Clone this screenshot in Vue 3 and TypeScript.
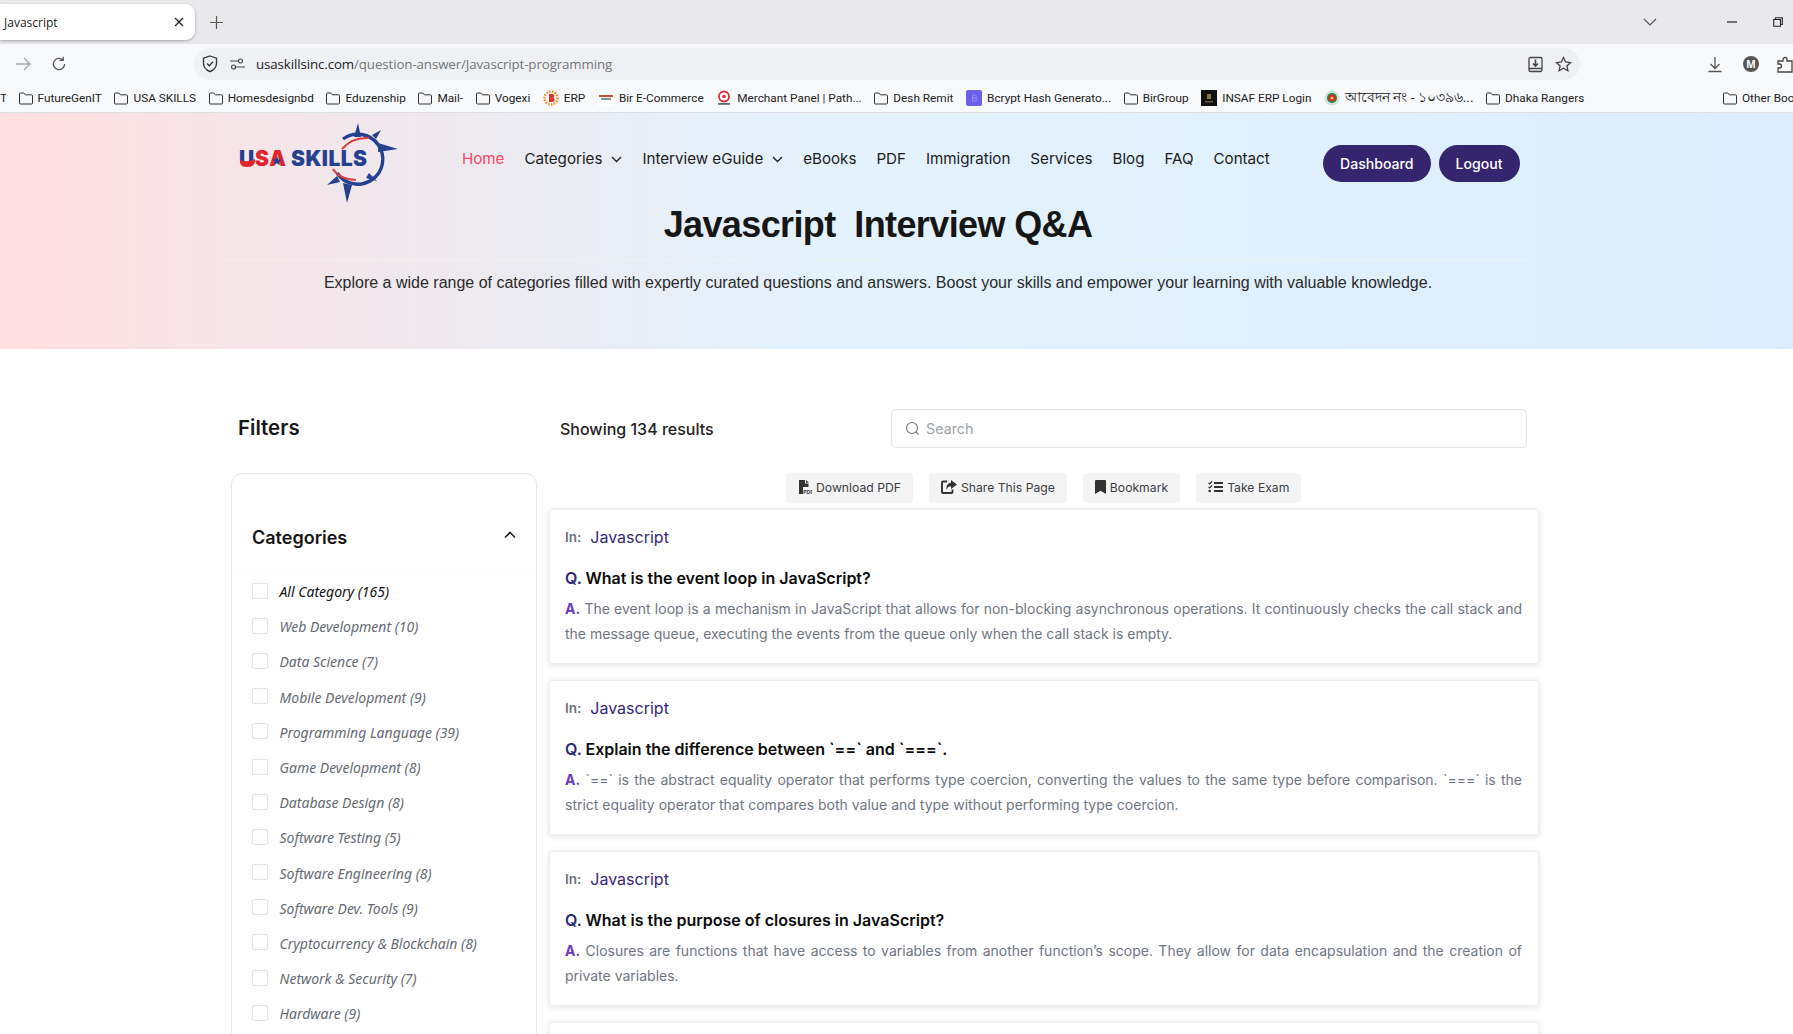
<script setup lang="ts">
interface Mark { label: string; kind: string }
const marks: Mark[] = [
  { label: 'FutureGenIT', kind: 'folder' },
  { label: 'USA SKILLS', kind: 'folder' },
  { label: 'Homesdesignbd', kind: 'folder' },
  { label: 'Eduzenship', kind: 'folder' },
  { label: 'Mail-', kind: 'folder' },
  { label: 'Vogexi', kind: 'folder' },
  { label: 'ERP', kind: 'erp' },
  { label: 'Bir E-Commerce', kind: 'bir' },
  { label: 'Merchant Panel | Path...', kind: 'merchant' },
  { label: 'Desh Remit', kind: 'folder' },
  { label: 'Bcrypt Hash Generato...', kind: 'bcrypt' },
  { label: 'BirGroup', kind: 'folder' },
  { label: 'INSAF ERP Login', kind: 'insaf' },
  { label: 'আবেদন নং - ১০৩৯৬...', kind: 'bd' },
  { label: 'Dhaka Rangers', kind: 'folder' },
]
const navItems = [
  { label: 'Home', active: true },
  { label: 'Categories', caret: true },
  { label: 'Interview eGuide', caret: true },
  { label: 'eBooks' },
  { label: 'PDF' },
  { label: 'Immigration' },
  { label: 'Services' },
  { label: 'Blog' },
  { label: 'FAQ' },
  { label: 'Contact' },
]
const categories = [
  'All Category (165)', 'Web Development (10)', 'Data Science (7)', 'Mobile Development (9)',
  'Programming Language (39)', 'Game Development (8)', 'Database Design (8)', 'Software Testing (5)',
  'Software Engineering (8)', 'Software Dev. Tools (9)', 'Cryptocurrency & Blockchain (8)',
  'Network & Security (7)', 'Hardware (9)',
]
const qas = [
  {
    q: 'What is the event loop in JavaScript?',
    a: 'The event loop is a mechanism in JavaScript that allows for non-blocking asynchronous operations. It continuously checks the call stack and the message queue, executing the events from the queue only when the call stack is empty.',
  },
  {
    q: 'Explain the difference between `==` and `===`.',
    a: '`==` is the abstract equality operator that performs type coercion, converting the values to the same type before comparison. `===` is the strict equality operator that compares both value and type without performing type coercion.',
  },
  {
    q: 'What is the purpose of closures in JavaScript?',
    a: 'Closures are functions that have access to variables from another function’s scope. They allow for data encapsulation and the creation of private variables.',
  },
]
</script>

<template>
  <div class="page">
    <div class="strip">
      <div class="tab">
        <span class="tab-title">Javascript</span>
        <svg class="tab-x" width="10" height="10" viewBox="0 0 10 10"><path d="M1 1l8 8M9 1l-8 8" stroke="#222" stroke-width="1.3" /></svg>
      </div>
      <svg class="plus" width="13" height="13" viewBox="0 0 13 13"><path d="M6.5 0v13M0 6.5h13" stroke="#555" stroke-width="1.2" /></svg>
      <div class="win">
        <svg class="win-chev" width="14" height="8" viewBox="0 0 14 8"><path d="M1 1l6 6 6-6" fill="none" stroke="#555" stroke-width="1.2" /></svg>
        <svg class="win-min" width="10" height="2" viewBox="0 0 10 2"><path d="M0 1h10" stroke="#222" stroke-width="1.2" /></svg>
        <svg class="win-max" width="10" height="10" viewBox="0 0 10 10"><path d="M2.5 2.5V.7h6.8v6.8H7.5M.7 2.5h6.8v6.8H.7z" fill="none" stroke="#222" stroke-width="1.1" /></svg>
      </div>
    </div>

    <div class="toolbar">
      <svg class="tool-fwd" width="16" height="14" viewBox="0 0 16 14"><path d="M1 7h14M9 1l6 6-6 6" fill="none" stroke="#a3a5a8" stroke-width="1.3" /></svg>
      <svg class="tool-reload" width="16" height="16" viewBox="0 0 16 16"><path d="M13.6 8a5.6 5.6 0 1 1-1.7-4M12.2 .8v3.6H8.6" fill="none" stroke="#555" stroke-width="1.3" /></svg>
      <div class="omni">
        <svg class="omni-shield" width="16" height="18" viewBox="0 0 16 18"><path d="M8 1l6.500 2.200v5c0 4-2.800 6.800-6.500 8.500-3.700-1.700-6.500-4.500-6.500-8.500v-5z" fill="none" stroke="#333" stroke-width="1.300" /><path d="M5 8.500l2.200 2.200L11 6.800" fill="none" stroke="#333" stroke-width="1.300" /></svg>
        <svg class="omni-tune" width="15" height="12" viewBox="0 0 15 12"><circle cx="10.500" cy="3" r="2" fill="none" stroke="#444" stroke-width="1.200" /><circle cx="3.500" cy="9" r="2" fill="none" stroke="#444" stroke-width="1.200" /><path d="M0 3h8M6 9h9" stroke="#444" stroke-width="1.200" /></svg>
        <span class="url"><span class="url-host">usaskillsinc.com</span>/question-answer/Javascript-programming</span>
        <svg class="omni-install" width="17" height="17" viewBox="0 0 17 17"><path d="M3.500 1.500h10a1.500 1.500 0 0 1 1.500 1.500v11a1.500 1.500 0 0 1-1.500 1.500h-10A1.500 1.500 0 0 1 2 14V3a1.500 1.500 0 0 1 1.500-1.500zM2 12.500h13" fill="none" stroke="#444" stroke-width="1.300" /><path d="M8.500 3.500v6M6 7.500l2.500 2.500L11 7.500" fill="none" stroke="#444" stroke-width="1.600" /></svg>
        <svg class="omni-star" width="17" height="17" viewBox="0 0 17 17"><path d="M8.500 1.500l2.100 4.500 4.900.6-3.600 3.300 1 4.800-4.400-2.400-4.400 2.400 1-4.800L1.500 6.600l4.900-.6z" fill="none" stroke="#444" stroke-width="1.300" /></svg>
      </div>
      <svg class="tool-dl" width="16" height="17" viewBox="0 0 16 17"><path d="M8 1v11M3.500 8L8 12.500 12.500 8M1.500 15.500h13" fill="none" stroke="#555" stroke-width="1.300" /></svg>
      <span class="tool-avatar">M</span>
      <svg class="tool-ext" width="16" height="17" viewBox="0 0 16 17"><path d="M6 3.500a2 2 0 0 1 4 0V5h5v11H1v-4h1.500a2 2 0 0 0 0-4H1V5h5z" fill="none" stroke="#444" stroke-width="1.300" /></svg>
    </div>

    <div class="bookmarks">
      <span class="bm-cut">T</span>
      <div v-for="m in marks" :key="m.label" class="bm" :class="'bm-' + m.kind">
        <svg v-if="m.kind === 'folder'" class="bm-icon" width="14" height="13" viewBox="0 0 14 13"><path d="M1.500 1h3.300l1.500 1.800h6.200a1 1 0 0 1 1 1V11a1 1 0 0 1-1 1h-11a1 1 0 0 1-1-1V2a1 1 0 0 1 1-1z" fill="none" stroke="#333" stroke-width="1" /></svg>
        <svg v-else-if="m.kind === 'erp'" class="bm-icon" width="16" height="16" viewBox="0 0 16 16"><circle cx="8" cy="8" r="6.500" fill="none" stroke="#f08a1d" stroke-width="2.400" stroke-dasharray="1.500 1.300" /><path d="M6 4h3.500a2 2 0 0 1 .8 3.800A2.200 2.200 0 0 1 9.600 12H6z" fill="#e4342a" /></svg>
        <svg v-else-if="m.kind === 'bir'" class="bm-icon" width="16" height="16" viewBox="0 0 16 16"><rect width="16" height="16" fill="#fff" /><rect x="1" y="5" width="14" height="2" fill="#c7512d" /><rect x="3" y="8" width="10" height="2" fill="#8e8e8e" /></svg>
        <svg v-else-if="m.kind === 'merchant'" class="bm-icon" width="16" height="16" viewBox="0 0 16 16"><circle cx="8" cy="6.500" r="5" fill="none" stroke="#e22c3a" stroke-width="1.800" /><circle cx="8" cy="6.500" r="1.800" fill="#e22c3a" /><rect x="2" y="13" width="12" height="1.800" fill="#666" /></svg>
        <svg v-else-if="m.kind === 'bcrypt'" class="bm-icon" width="16" height="16" viewBox="0 0 16 16"><rect width="16" height="16" rx="2" fill="#6a5fe8" /><path d="M6.500 5h2.500a1.500 1.500 0 0 1 0 3H6.500zM6.500 8h3a1.500 1.500 0 0 1 0 3h-3z" fill="none" stroke="#9a92f2" stroke-width=".8" /></svg>
        <svg v-else-if="m.kind === 'insaf'" class="bm-icon" width="16" height="16" viewBox="0 0 16 16"><rect width="16" height="16" fill="#111" /><rect x="6" y="4" width="4" height="5" fill="#8a7248" /><rect x="4" y="11" width="8" height="1.500" fill="#6a5a3a" /></svg>
        <svg v-else class="bm-icon" width="16" height="16" viewBox="0 0 16 16"><circle cx="8" cy="8" r="7.500" fill="#cfe6d6" /><circle cx="8" cy="8" r="5" fill="#1c8a4a" /><circle cx="8" cy="8" r="3.600" fill="#e0262e" /><circle cx="8" cy="8" r="1.500" fill="#f2c230" /></svg>
        <span>{{ m.label }}</span>
      </div>
      <div class="bm bm-other">
        <svg class="bm-icon" width="14" height="13" viewBox="0 0 14 13"><path d="M1.500 1h3.300l1.500 1.800h6.200a1 1 0 0 1 1 1V11a1 1 0 0 1-1 1h-11a1 1 0 0 1-1-1V2a1 1 0 0 1 1-1z" fill="none" stroke="#333" stroke-width="1" /></svg>
        <span>Other Bookmarks</span>
      </div>
    </div>

    <section class="hero">
      <div class="hero-inner">
        <header class="site-head">
          <svg class="logo" width="165" height="85" viewBox="235 118 165 85" role="img">
            <path d="M343 139A25 25 0 1 1 337 173" fill="none" stroke="#25408f" stroke-width="3.400" />
            <path d="M358 123l3 14-7 0z" fill="#25408f" />
            <path d="M398 149l-20 3 0-9z" fill="#25408f" />
            <path d="M347 203l-4-20 9 2z" fill="#25408f" />
            <path d="M327 185l10-9 3 6z" fill="#25408f" />
            <path d="M381 130l-9 5 4 4z" fill="#25408f" />
            <path d="M377 181l-8-8-3 5z" fill="#25408f" />
            <path d="M342 149q10-12 27-11" fill="none" stroke="#e23b44" stroke-width="2" />
            <path d="M333 169q6 10 23 11" fill="none" stroke="#e23b44" stroke-width="2" />
            <text x="239" y="166" class="logo-usa"><tspan class="logo-u">U</tspan>SA</text>
            <text x="291" y="166" class="logo-skills">SKILLS</text>
            <path d="M240 160q7 3 15-1v3q-1 5-8 5t-7-5z" fill="#e1252f" />
            <path d="M277 156l1.300 3.400 3.500.2-2.800 2.200 1 3.400-3-2-3 2 1-3.400-2.800-2.200 3.500-.2z" fill="#25408f" />
          </svg>
          <nav class="nav">
            <a v-for="n in navItems" :key="n.label" class="nav-link" :class="{ active: n.active }">
              {{ n.label }}
              <svg v-if="n.caret" width="11" height="7" viewBox="0 0 11 7"><path d="M1 1l4.500 4.500L10 1" fill="none" stroke="#222" stroke-width="1.400" /></svg>
            </a>
          </nav>
          <div class="head-btns">
            <button class="pill">Dashboard</button>
            <button class="pill">Logout</button>
          </div>
        </header>
        <h1 class="title">Javascript&nbsp; Interview Q&amp;A</h1>
        <p class="sub">Explore a wide range of categories filled with expertly curated questions and answers. Boost your skills and empower your learning with valuable knowledge.</p>
      </div>
    </section>

    <main class="main">
      <aside class="side">
        <h2 class="filters">Filters</h2>
        <div class="side-card">
          <div class="side-head">
            <h3>Categories</h3>
            <svg width="12" height="8" viewBox="0 0 12 8"><path d="M1 6.500l5-5 5 5" fill="none" stroke="#222" stroke-width="1.600" /></svg>
          </div>
          <ul class="cats">
            <li v-for="(c, i) in categories" :key="c" class="cat" :class="{ first: i === 0 }">
              <span class="box"></span>
              <span>{{ c }}</span>
            </li>
          </ul>
        </div>
      </aside>

      <div class="content">
        <div class="top-row">
          <span class="showing">Showing 134 results</span>
          <div class="search">
            <svg width="15" height="15" viewBox="0 0 15 15"><circle cx="7" cy="7" r="5.500" fill="none" stroke="#777" stroke-width="1.100" /><path d="M11 11l2.500 2.500" stroke="#777" stroke-width="1.100" /></svg>
            <span>Search</span>
          </div>
        </div>
        <div class="actions">
          <button class="act">
            <svg width="14" height="14" viewBox="0 0 14 14"><path d="M1 0h6v3.500h3.500V7H5v7H1z" fill="#333" /><path d="M8 0l3 2.800H8z" fill="#333" /><text x="5.300" y="13.600" class="pdf-tag">PDF</text></svg>
            Download PDF
          </button>
          <button class="act">
            <svg width="16" height="14" viewBox="0 0 16 14"><path d="M6 1.500H2a1 1 0 0 0-1 1v9.500a1 1 0 0 0 1 1h8.500a1 1 0 0 0 1-1V9.500" fill="none" stroke="#333" stroke-width="1.900" /><path d="M10 0l6 4.500L10 9V6.300C8 6.300 6.300 7.300 5.500 10 5 6 6.500 3 10 2.700z" fill="#333" /></svg>
            Share This Page
          </button>
          <button class="act">
            <svg width="11" height="14" viewBox="0 0 11 14"><path d="M0 1a1 1 0 0 1 1-1h9a1 1 0 0 1 1 1v13l-5.500-3.200L0 14z" fill="#333" /></svg>
            Bookmark
          </button>
          <button class="act">
            <svg width="15" height="12" viewBox="0 0 15 12"><path d="M6 2h9M6 6h9M6 10h9" stroke="#333" stroke-width="1.800" /><path d="M.5 1.800l1.200 1.200L4 .5M.5 5.800l1.200 1.200L4 4.500" fill="none" stroke="#333" stroke-width="1.200" /><circle cx="1.700" cy="10" r="1.300" fill="#333" /></svg>
            Take Exam
          </button>
        </div>
        <article v-for="(qa, i) in qas" :key="i" class="qa">
          <div class="qa-in"><span class="in">In:</span><span class="in-name">Javascript</span></div>
          <h4 class="qa-q"><span class="q">Q.</span> {{ qa.q }}</h4>
          <p class="qa-a"><span class="a">A.</span> {{ qa.a }}</p>
        </article>
        <article class="qa"></article>
      </div>
    </main>
  </div>
</template>

<style>
html, body { margin: 0; overflow: hidden; background: #fff; }
</style>

<style scoped>
.page {
  width: 1793px;
  height: 1034px;
  overflow: hidden;
  font-family: Inter, "Noto Sans", sans-serif;
  color: #1c1c1c;
  display: flex;
  flex-direction: column;
}
.strip {
  height: 44px;
  flex: none;
  background: #e9e9eb;
  display: flex;
  align-items: flex-start;
  position: relative;
}
.tab {
  width: 195px;
  height: 36px;
  margin-top: 4px;
  background: #fff;
  border-radius: 0 9px 9px 0;
  box-shadow: 0 1px 3px rgba(0, 0, 0, .3);
  display: flex;
  align-items: center;
  padding-left: 4px;
  box-sizing: border-box;
}
.tab-title { font: 12px "Open Sans", sans-serif; color: #222; flex: 1; }
.tab-x { margin-right: 11px; }
.plus { margin: 16px 0 0 15px; }
.win { margin-left: auto; height: 44px; display: flex; align-items: center; }
.win-min { margin-left: 70px; }
.win-max { margin: 0 10px 0 36px; }
.toolbar {
  height: 40px;
  flex: none;
  background: #f8f9fb;
  display: flex;
  align-items: center;
  position: relative;
}
.tool-fwd { margin-left: 15px; }
.tool-reload { margin-left: 20px; }
.omni {
  width: 1386px;
  height: 32px;
  margin-left: 127px;
  background: #eff0f3;
  border-radius: 16px;
  display: flex;
  align-items: center;
  box-sizing: border-box;
  padding-left: 8px;
}
.omni-tune { margin-left: 12px; }
.url { margin-left: 11px; font: 13.300px "Open Sans", sans-serif; color: #73767a; letter-spacing: -.1px; }
.url-host { color: #202124; }
.omni-install { margin-left: auto; }
.omni-star { margin: 0 8px 0 11px; }
.tool-dl { margin-left: 127px; }
.tool-avatar {
  width: 16px;
  height: 16px;
  border-radius: 50%;
  background: #555;
  color: #fff;
  font: 700 10px "Open Sans", sans-serif;
  display: flex;
  align-items: center;
  justify-content: center;
  margin-left: 20px;
}
.tool-ext { margin-left: 18px; }
.bookmarks {
  height: 28px;
  flex: none;
  background: #f8f9fb;
  border-bottom: 1px solid #dddfe2;
  display: flex;
  align-items: center;
  gap: 12.600px;
  font: 11.800px Roboto, "Noto Sans", sans-serif;
  color: #222;
  white-space: nowrap;
  overflow: hidden;
}
.bm-cut { width: 6px; overflow: hidden; }
.bm { display: flex; align-items: center; gap: 5px; flex: none; }
.bm-bd span { font-size: 13.500px; }
.bm-icon { flex: none; }
.bm-other { margin-left: auto; width: 70px; overflow: hidden; }
.hero {
  height: 236px;
  flex: none;
  background: linear-gradient(90deg, #ffdfe1 0%, #f0e8ed 22%, #e3f2fc 46%, #dcedfd 100%);
  box-sizing: border-box;
  padding: 5px 0 0 223px;
}
.hero-inner { width: 1310px; }
.site-head { display: flex; align-items: flex-start; height: 70px; position: relative; }
.logo { flex: none; margin-left: 12px; }
.logo-usa { font: 900 21px Inter, sans-serif; fill: #e1252f; letter-spacing: .8px; }
.logo-u { fill: #25408f; }
.logo-skills { font: 900 21px Inter, sans-serif; fill: #25408f; letter-spacing: .45px; }
.nav { display: flex; gap: 20px; margin: 30px 0 0 62px; white-space: nowrap; }
.nav-link { font-size: 15.150px; line-height: 22px; color: #1c1c1c; display: flex; align-items: center; gap: 9px; }
.nav-link.active { color: #f6466a; }
.head-btns { display: flex; gap: 8px; position: absolute; left: 1100px; top: 27px; }
.pill {
  height: 37px;
  padding: 0 17px;
  border: 0;
  border-radius: 19px;
  background: #35256f;
  color: #fff;
  font: 500 14.100px Inter, sans-serif;
}
.title {
  margin: 15px 0 0;
  padding-bottom: 12px;
  border-bottom: 1px solid rgba(250, 250, 232, .4);
  text-align: center;
  font: 700 36px/44px "Liberation Sans", sans-serif;
  letter-spacing: -.62px;
  color: #161616;
}
.sub {
  margin: 11px 0 0;
  text-align: center;
  font: 16px/24px "Liberation Sans", sans-serif;
  color: #2a2a2a;
}
.main { flex: 1; display: flex; gap: 12px; padding: 60px 0 0 231px; min-height: 0; }
.side { width: 306px; flex: none; }
.filters {
  margin: 0 0 24px 7px;
  height: 40px;
  font: 600 20.500px/38px Inter, sans-serif;
  color: #161616;
}
.side-card {
  border: 1px solid #e8e8e8;
  border-radius: 11px;
  height: 600px;
  box-sizing: border-box;
}
.side-head {
  height: 100px;
  box-sizing: border-box;
  padding: 28px 20px 0 20px;
  display: flex;
  align-items: center;
  justify-content: space-between;
  border-bottom: 1px solid #fdfdf3;
}
.side-head svg { margin-top: -5px; }
.side-head h3 { margin: 0; font: 600 18px Inter, sans-serif; color: #161616; }
.cats { list-style: none; margin: 0; padding: 0 20px; }
.cat {
  height: 35.200px;
  display: flex;
  align-items: center;
  font: italic 14px "Noto Sans", "Open Sans", sans-serif;
  color: #666b73;
  gap: 11.500px;
}
.cat.first { color: #111; }
.box {
  width: 16px;
  height: 16px;
  border: 1px solid #e5e5e5;
  border-radius: 2px;
  box-sizing: border-box;
  flex: none;
  position: relative;
  top: -1px;
}
.content { width: 990px; flex: none; }
.top-row { height: 39px; display: flex; align-items: center; }
.showing { margin-left: 11px; width: 331px; flex: none; font: 500 16px Inter, sans-serif; color: #222; }
.search {
  width: 636px;
  height: 39px;
  box-sizing: border-box;
  border: 1px solid #e4e4e4;
  border-radius: 5px;
  display: flex;
  align-items: center;
  gap: 6px;
  padding-left: 13px;
  font-size: 14.300px;
  color: #a0a3a8;
}
.actions { display: flex; gap: 16px; margin: 25px 0 6px 237px; height: 30px; }
.act {
  height: 30px;
  padding: 0 12px 2px;
  border: 0;
  border-radius: 4px;
  background: #f4f4f5;
  color: #3a3d44;
  font: 12.200px Inter, sans-serif;
  display: flex;
  align-items: center;
  gap: 4px;
  white-space: nowrap;
}
.pdf-tag { font: 700 5px Inter, sans-serif; fill: #333; }
.qa {
  height: 155px;
  box-sizing: border-box;
  margin: 0 0 16px;
  padding: 13px 16px 0 15px;
  background: #fff;
  border: 1px solid #eeeeee;
  border-radius: 3px;
  box-shadow: 0 1px 6px rgba(0, 0, 0, .12);
}
.qa-in { display: flex; align-items: center; gap: 9px; height: 28px; }
.in { font: 600 13.500px Inter, sans-serif; color: #6b7280; }
.in-name { font: 16px Inter, sans-serif; color: #35277c; }
.qa-q { margin: 15px 0 0; font: 600 16px/24px Inter, sans-serif; color: #0b0b0b; }
.q { color: #2f2a78; }
.qa-a { margin: 6px 0 0; font: 14px/25px Inter, sans-serif; color: #6f7682; text-align: justify; }
.a { color: #6d3abf; font-weight: 700; }
</style>
